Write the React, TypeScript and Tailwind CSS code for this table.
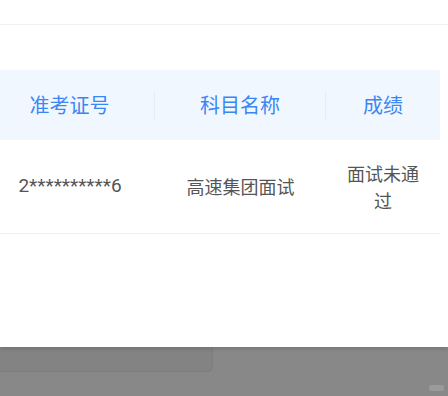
import React from "react";

const font = { fontFamily: '"Noto Sans CJK SC", "Noto Sans", sans-serif' };
const idFont = { fontFamily: 'Roboto, "Noto Sans CJK SC", sans-serif' };

export default function App() {
  return (
    <div className="w-[448px] h-[396px] bg-[#888888] flex flex-col overflow-hidden" style={font}>
      <div className="relative z-10 h-[347px] shrink-0 bg-white flex flex-col shadow-[0_2px_4px_rgba(0,0,0,0.12)]">
        <div className="h-[25px] shrink-0 border-b border-[#f2f2f2]" />
        <div className="h-[45px] shrink-0" />
        <div className="-ml-[15px] w-[455px] flex flex-col">
          <div className="h-[70px] bg-[#f0f7ff] flex items-center text-[20px] text-[#3b86f5]">
            <div className="w-[169px] flex items-center justify-center">准考证号</div>
            <div className="w-px h-[31px] bg-[#e4edf8]" />
            <div className="w-[170px] flex items-center justify-center">科目名称</div>
            <div className="w-px h-[31px] bg-[#e4edf8]" />
            <div className="flex-1 flex items-center justify-center">成绩</div>
          </div>
          <div className="h-[94px] border-b border-[#f0f0f0] flex items-center text-[18px] text-[#555555]">
            <div className="w-[170px] text-center text-[19px]" style={idFont}>2**********6</div>
            <div className="w-[171px] text-center">高速集团面试</div>
            <div className="flex-1 px-[16px] text-center leading-[27px]">面试未通过</div>
          </div>
        </div>
      </div>
      <div className="relative flex-1">
        <div className="w-[213px] h-[25px] bg-[#838383] border-r border-b border-[#7d7d7d] rounded-br-[6px]" />
        <div className="absolute left-[429px] top-[38px] w-[15px] h-[6px] rounded-[2px] bg-[#9a9a9a]" />
      </div>
    </div>
  );
}
